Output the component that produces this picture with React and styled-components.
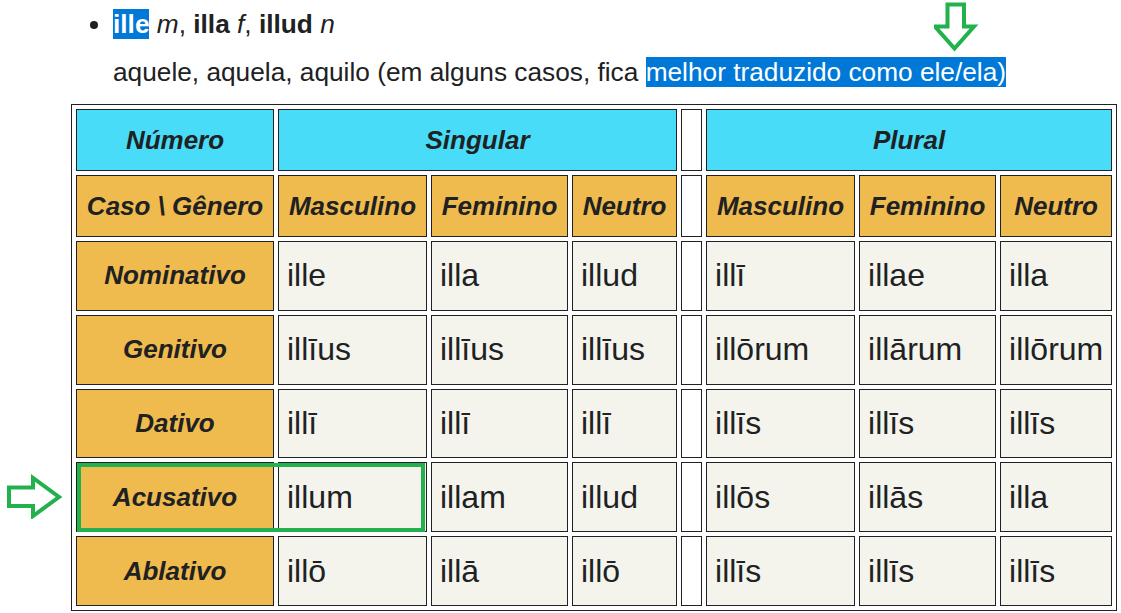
import React from "react";
import styled, { createGlobalStyle } from "styled-components";

const GlobalStyle = createGlobalStyle`
  body {
    margin: 0;
    background: #ffffff;
    color: #202122;
    font-family: "Liberation Sans", Arial, sans-serif;
  }
`;

const rows = [
  ["Nominativo", "ille", "illa", "illud", "illī", "illae", "illa"],
  ["Genitivo", "illīus", "illīus", "illīus", "illōrum", "illārum", "illōrum"],
  ["Dativo", "illī", "illī", "illī", "illīs", "illīs", "illīs"],
  ["Acusativo", "illum", "illam", "illud", "illōs", "illās", "illa"],
  ["Ablativo", "illō", "illā", "illō", "illīs", "illīs", "illīs"],
];

const colWidths = [198, 149, 137, 105, 21, 149, 137, 112];

const App = () => {
  return (
    <Page>
      <GlobalStyle />
      <Entry>
        <Item>
          <Selected>
            <b>ille</b>
          </Selected>{" "}
          <i>m</i>, <b>illa</b> <i>f</i>, <b>illud</b> <i>n</i>
          <Meaning>
            aquele, aquela, aquilo (em alguns casos, fica{" "}
            <Selected>melhor traduzido como ele/ela)</Selected>
          </Meaning>
        </Item>
      </Entry>

      <Table>
        <colgroup>
          {colWidths.map((w, i) => (
            <col key={i} style={{ width: w }} />
          ))}
        </colgroup>
        <tbody>
          <tr>
            <Head $tone="cyan" $short>Número</Head>
            <Head $tone="cyan" $short colSpan={3}>
              Singular
            </Head>
            <Gap $short />
            <Head $tone="cyan" $short colSpan={3}>
              Plural
            </Head>
          </tr>
          <tr>
            <Head $tone="orange" $short>Caso \ Gênero</Head>
            <Head $tone="orange" $short>Masculino</Head>
            <Head $tone="orange" $short>Feminino</Head>
            <Head $tone="orange" $short>Neutro</Head>
            <Gap $short />
            <Head $tone="orange" $short>Masculino</Head>
            <Head $tone="orange" $short>Feminino</Head>
            <Head $tone="orange" $short>Neutro</Head>
          </tr>
          {rows.map(([caseName, ...forms]) => (
            <tr key={caseName}>
              <Head $tone="orange">{caseName}</Head>
              {forms.slice(0, 3).map((f, i) => (
                <Form key={"s" + i}>{f}</Form>
              ))}
              <Gap />
              {forms.slice(3).map((f, i) => (
                <Form key={"p" + i}>{f}</Form>
              ))}
            </tr>
          ))}
        </tbody>
      </Table>

      <Mark />
      <DownArrow width="48" height="54" viewBox="0 0 48 54">
        <polygon
          points="13.5,2.5 30,2.5 30,24.5 40,24.5 20.5,46.5 1,24.5 13.5,24.5"
          fill="none"
          stroke="#22b14c"
          strokeWidth="4"
          strokeLinejoin="miter"
        />
      </DownArrow>
      <RightArrow width="60" height="46" viewBox="0 0 60 46">
        <polygon
          points="2,14.5 26,14.5 26,5 52,24 26,43 26,33 2,33"
          fill="none"
          stroke="#22b14c"
          strokeWidth="4"
          strokeLinejoin="miter"
        />
      </RightArrow>
    </Page>
  );
};

export default App;

const Page = styled.div`
  position: relative;
  width: 1121px;
  height: 613px;
  overflow: hidden;
  padding-left: 71px;
  box-sizing: border-box;
`;

const Entry = styled.ul`
  margin: 9px 0 0;
  padding: 0 0 0 42px;
  font-size: 26.25px;
  line-height: normal;
`;

const Item = styled.li`
  list-style: disc;
  b {
    font-weight: 700;
  }
`;

const Meaning = styled.div`
  margin-top: 17px;
`;

const Selected = styled.span`
  background: #0078d7;
  color: #ffffff;
`;

const Table = styled.table`
  margin-top: 16px;
  width: 1046px;
  table-layout: fixed;
  border-collapse: separate;
  border-spacing: 4px;
  border: 1px solid #202122;
`;

const Head = styled.th`
  box-sizing: border-box;
  height: ${(p) => (p.$short ? "62px" : "69.8px")};
  padding: 0 4px;
  border: 1px solid #202122;
  background: ${(p) => (p.$tone === "cyan" ? "#48dcf8" : "#efba4e")};
  font-size: 26px;
  font-weight: 700;
  font-style: italic;
  text-align: center;
  vertical-align: middle;
  white-space: nowrap;
  color: #202122;
`;

const Form = styled.td`
  box-sizing: border-box;
  height: 69.8px;
  padding: 0 4px 0 8px;
  border: 1px solid #202122;
  background: #f4f4ed;
  font-size: 32px;
  text-align: left;
  vertical-align: middle;
  white-space: nowrap;
  color: #202122;
`;

const Gap = styled.td`
  box-sizing: border-box;
  height: ${(p) => (p.$short ? "62px" : "69.8px")};
  padding: 0;
  border: 1px solid #202122;
  background: #ffffff;
`;

const Mark = styled.div`
  position: absolute;
  left: 77px;
  top: 463px;
  width: 348px;
  height: 69px;
  box-sizing: border-box;
  border: 4px solid #22b14c;
`;

const DownArrow = styled.svg`
  position: absolute;
  left: 934px;
  top: 2px;
`;

const RightArrow = styled.svg`
  position: absolute;
  left: 7px;
  top: 473px;
`;
